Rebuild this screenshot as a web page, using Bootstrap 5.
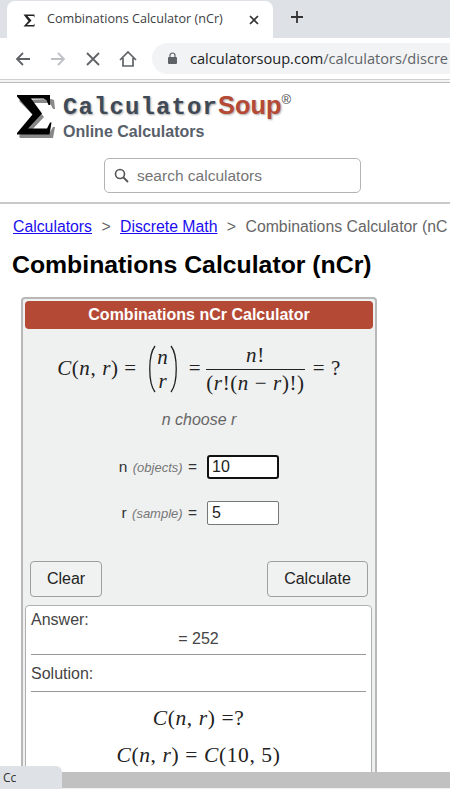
<!DOCTYPE html>
<html lang="en">
<head>
  <meta charset="UTF-8">
  <meta name="viewport" content="width=device-width, initial-scale=1">
  <title>Combinations Calculator (nCr)</title>
  <link href="https://cdn.jsdelivr.net/npm/bootstrap@5.3.0/dist/css/bootstrap.min.css" rel="stylesheet">
  <style>
    html, body { height: 789px; overflow: hidden; }
    body { font-family: "Liberation Sans", Arial, sans-serif; font-size: 14px; color: #333; background: #fff; }

    /* browser chrome */
    .tab-strip { height: 38px; background: #dee1e6; padding: 1px 0 0 7px; }
    .tab-shape { width: 266px; height: 37px; background: #fff; border-radius: 8px 8px 0 0; padding: 0 12px 0 15px; }
    .tab-title { font-family: "Open Sans", sans-serif; font-size: 12.6px; color: #3c4043; width: 201px; margin-left: 11px; white-space: nowrap; }
    .tool-row { height: 41px; background: #fff; padding-left: 14px; }
    .tool-icon { width: 18px; height: 18px; margin-right: 17px; flex: none; }
    .url-pill { height: 31px; flex: 1; margin-left: -2px; background: #f1f3f4; border-radius: 16px 0 0 16px; padding-left: 15px; white-space: nowrap; overflow: hidden; font-family: "Open Sans", sans-serif; font-size: 14.6px; color: #5f6368; }
    .url-pill b { font-weight: 400; color: #202124; }
    .url-text { margin-left: 12px; }
    .chrome-line { height: 4px; border-top: 1px solid #d0d0d0; border-bottom: 1px solid #b9b9b9; background: #f4f4f4; }

    /* site header */
    .site-head { height: 121px; border-bottom: 2px solid #c9c9c9; }
    .logo-row { padding: 10px 0 0 16px; }
    .brand-name { font-family: "Liberation Mono", monospace; font-size: 24px; line-height: 25px; font-weight: 700; color: #3f4a56; text-shadow: 1px 1px 2px #aaa; white-space: nowrap; letter-spacing: 1.1px; }
    .brand-name span { font-family: "Liberation Sans", sans-serif; font-size: 25.4px; color: #b44a36; letter-spacing: 0; }
    .brand-name sup { font-family: "Liberation Sans", sans-serif; font-size: 13px; font-weight: 400; top: -.75em; color: #444; text-shadow: none; letter-spacing: 0; }
    .brand-sub { font-size: 16px; line-height: 20px; font-weight: 700; color: #58606a; margin-top: 2px; }
    .search-box { width: 257px; height: 35px; margin: 16px 0 0 104px; border: 1px solid #b4b4b4; border-radius: 5px; padding-left: 9px; font-size: 15.5px; color: #757575; }

    /* crumbs and heading */
    .crumbs { margin: 14px 0 0 13px; font-size: 15.8px; line-height: 18px; color: #666; white-space: nowrap; }
    .crumbs a { color: #1a0dee; }
    .crumbs i { font-style: normal; margin: 0 5px 0 5px; }
    .page-title { margin: 14px 0 0 12px; font-size: 24.8px; line-height: 30px; font-weight: 700; color: #000; white-space: nowrap; }

    /* calculator */
    .calc-box { width: 356px; margin: 17px 0 0 21px; padding: 2px 2px 0; background: #eff0f0; border: 2px solid #b8b8b8; border-bottom: 0; border-radius: 4px 4px 0 0; height: 480px; overflow: hidden; }
    .calc-title { height: 28px; line-height: 28px; width: 348px; border-radius: 4px; background: #b44a36; color: #fff; font-size: 16px; font-weight: 700; text-align: center; }
    .math-line { font-family: "Liberation Serif", serif; font-size: 21px; color: #222; letter-spacing: .6px; }
    .math-line em { font-style: italic; }
    .calc-formula { height: 67px; margin-top: 6px; }
    .binom { width: 34px; height: 48px; position: relative; margin: 0 9px; }
    .binom svg { width: 34px; height: 48px; }
    .binom span { position: absolute; left: 0; right: 0; text-align: center; font-style: italic; line-height: 20px; }
    .binom .binom-top { top: 2px; }
    .binom .binom-low { top: 26px; }
    .frac-part { text-align: center; margin: 0 8px 0 5px; line-height: 26px; }
    .frac-part div:first-child { border-bottom: 1px solid #222; padding: 0 4px 1px; }
    .choose-note { margin-top: 9px; line-height: 18px; font-size: 16px; font-style: italic; color: #666; text-align: center; }
    .input-line { height: 24px; font-size: 15.5px; color: #333; }
    .input-line small { font-size: 13px; font-style: italic; color: #777; margin: 0 1px; }
    .input-label { width: 175px; text-align: right; padding-right: 3px; white-space: nowrap; }
    .calc-input { width: 72px; height: 24px; margin-left: 7px; padding: 0 4px; background: #fff; border: 1px solid #777; border-radius: 2px; font-size: 16px; line-height: 22px; color: #222; }
    .calc-input.is-focus { border: 2px solid #111; border-radius: 3px; padding: 0 3px; line-height: 20px; }
    .first-input { margin-top: 26px; }
    .second-input { margin-top: 22px; }
    .btn-row { margin: 36px 5px 0 5px; }
    .btn-row .btn { height: 36px; padding: 0; background: #f0f1f1; border: 1px solid #9f9f9f; border-radius: 4px; font-size: 16px; color: #222; }
    .btn-clear { width: 72px; }
    .btn-calc { width: 101px; }
    .answer-box { width: 347px; height: 300px; margin: 8px 0 0; padding: 5px 5px 0; background: #fff; border: 1px solid #b0b0b0; border-radius: 4px 4px 0 0; font-size: 16px; line-height: 18px; color: #444; }
    .answer-num { text-align: center; margin-top: 1px; }
    .rule-line { height: 1px; background: #999; margin: 6px 0 8px; }
    .sol-label { line-height: 20px; margin-bottom: 7px; padding-top: 1px; }
    .sol-math { text-align: center; font-size: 21.5px; line-height: 24px; }
    .sol-gap { margin-top: 13px; }
    .sol-first { margin-top: 14px; }

    /* bottom of the window */
    .scroll-bar { position: absolute; left: 0; right: 0; top: 772px; height: 17px; background: #c1c1c1; border-bottom: 1px solid #eee; }
    .status-tip { position: absolute; left: 0; top: 766px; width: 62px; height: 23px; padding: 3px 0 0 3px; background: #dee1e6; border-top-right-radius: 6px; font-family: "Open Sans", sans-serif; font-size: 12px; color: #333; overflow: hidden; white-space: nowrap; }
  </style>
</head>
<body class="position-relative">

  <!-- browser tab -->
  <div class="tab-strip d-flex">
    <div class="tab-shape d-flex align-items-center">
      <svg class="flex-shrink-0" width="14" height="14" viewBox="0 0 14 14"><path d="M1.5 1.500h11v3l-1-1.500H5.500l4 4.500-4.500 4.500h6.500l1-1.500v3h-11l5-5.500z" fill="#222"/></svg>
      <span class="tab-title">Combinations Calculator (nCr)</span>
      <svg class="flex-shrink-0" width="12" height="12" viewBox="0 0 12 12"><path d="M2 2l8 8M10 2l-8 8" stroke="#333" stroke-width="1.700"/></svg>
    </div>
    <svg class="ms-3 mt-2" width="16" height="16" viewBox="0 0 16 16"><path d="M8 2v12M2 8h12" stroke="#333" stroke-width="1.800"/></svg>
  </div>

  <!-- address bar -->
  <div class="tool-row d-flex align-items-center">
    <svg class="tool-icon" viewBox="0 0 18 18"><path d="M16 9H3M9 3L3 9l6 6" fill="none" stroke="#5f6368" stroke-width="1.800"/></svg>
    <svg class="tool-icon" viewBox="0 0 18 18"><path d="M2 9h13M9 3l6 6-6 6" fill="none" stroke="#bdc1c6" stroke-width="1.800"/></svg>
    <svg class="tool-icon" viewBox="0 0 18 18"><path d="M3 3l12 12M15 3L3 15" fill="none" stroke="#5f6368" stroke-width="1.800"/></svg>
    <svg class="tool-icon" viewBox="0 0 18 18"><path d="M1 10l8-8 8 8M4 8v8h10V8" fill="none" stroke="#5f6368" stroke-width="1.700"/></svg>
    <div class="url-pill d-flex align-items-center">
      <svg class="flex-shrink-0" width="11" height="13" viewBox="0 0 11 13"><path d="M3 5V3.500a2.500 2.500 0 0 1 5 0V5" fill="none" stroke="#5f6368" stroke-width="1.200"/><rect x="1" y="5" width="9" height="7" rx="1" fill="#5f6368"/></svg>
      <span class="url-text"><b>calculatorsoup.com</b>/calculators/discre</span>
    </div>
  </div>
  <div class="chrome-line"></div>

  <!-- site header -->
  <div class="site-head">
    <div class="logo-row d-flex">
      <svg class="me-2" width="39" height="46" viewBox="0 0 39 46"><path d="M3 5l31-1 3 1 1 9h-2l-2-4-3-2H16l11 14-14 15h20l3-5h2l-2 11H3l-1-2 16-19L2 6z" fill="#888" transform="translate(1 2)"/><path d="M1 2h33v10h-1.500l-2-5-3-1.500H15l11 15-14 15h19l3-6h1.500l-2 12H1v-1.500l15.500-18.500L1 3.500z" fill="#000"/></svg>
      <div>
        <div class="brand-name">Calculator<span>Soup</span><sup>®</sup></div>
        <div class="brand-sub">Online Calculators</div>
      </div>
    </div>
    <div class="search-box d-flex align-items-center">
      <svg class="me-2" width="15" height="15" viewBox="0 0 15 15"><circle cx="6" cy="6" r="4.500" fill="none" stroke="#555" stroke-width="1.600"/><path d="M9.500 9.500L14 14" stroke="#555" stroke-width="1.800"/></svg>
      search calculators
    </div>
  </div>

  <!-- breadcrumb -->
  <div class="crumbs"><a href="#">Calculators</a><i> &gt; </i> <a href="#">Discrete Math</a><i> &gt; </i> Combinations Calculator (nC</div>
  <div class="page-title">Combinations Calculator (nCr)</div>

  <!-- calculator -->
  <div class="calc-box">
    <div class="calc-title">Combinations nCr Calculator</div>
    <div class="calc-formula math-line d-flex align-items-center justify-content-center">
      <span><em>C</em>(<em>n</em>, <em>r</em>) =</span>
      <div class="binom">
        <svg viewBox="0 0 34 48"><path d="M9 1C2 10 2 38 9 47M25 1c7 9 7 37 0 46" fill="none" stroke="#222" stroke-width="1.300"/></svg>
        <span class="binom-top">n</span>
        <span class="binom-low">r</span>
      </div>
      <span>=</span>
      <div class="frac-part"><div><em>n</em>!</div><div>(<em>r</em>!(<em>n</em> − <em>r</em>)!)</div></div>
      <span>= ?</span>
    </div>
    <div class="choose-note">n choose r</div>

    <div class="input-line first-input d-flex align-items-center">
      <div class="input-label">n <small>(objects)</small> =</div>
      <div class="calc-input is-focus">10</div>
    </div>
    <div class="input-line second-input d-flex align-items-center">
      <div class="input-label">r <small>(sample)</small> =</div>
      <div class="calc-input">5</div>
    </div>

    <div class="btn-row d-flex justify-content-between">
      <button type="button" class="btn btn-clear">Clear</button>
      <button type="button" class="btn btn-calc">Calculate</button>
    </div>

    <div class="answer-box">
      <div>Answer:</div>
      <div class="answer-num">= 252</div>
      <div class="rule-line"></div>
      <div class="sol-label">Solution:</div>
      <div class="rule-line"></div>
      <div class="sol-math sol-first math-line"><em>C</em>(<em>n</em>, <em>r</em>) =?</div>
      <div class="sol-math sol-gap math-line"><em>C</em>(<em>n</em>, <em>r</em>) = <em>C</em>(10, 5)</div>
    </div>
  </div>

  <div class="scroll-bar"></div>
  <div class="status-tip">Cc</div>

  <script src="https://cdn.jsdelivr.net/npm/bootstrap@5.3.0/dist/js/bootstrap.bundle.min.js"></script>
</body>
</html>
